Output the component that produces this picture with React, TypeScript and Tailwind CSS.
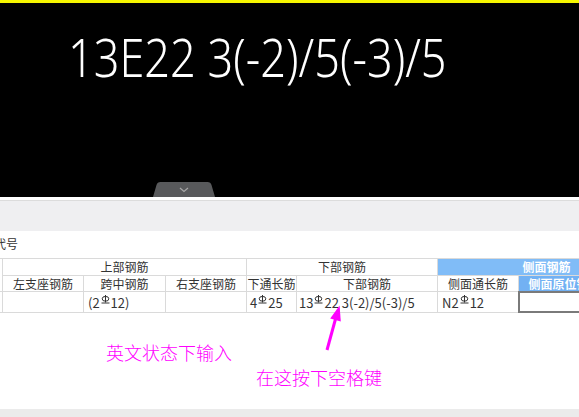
import React from 'react';

const cjk = { fontFamily: '"Noto Sans CJK SC", "Noto Sans", sans-serif' };

// 三级钢符号
function Bar() {
  return (
    <svg width="9" height="9" viewBox="0 0 9 9" className="inline-block mx-[1px] -translate-y-[3px]">
      <line x1="4.5" y1="0" x2="4.5" y2="7.5" stroke="#333" strokeWidth="1" />
      <ellipse cx="4.5" cy="3.8" rx="3.3" ry="2.4" fill="none" stroke="#333" strokeWidth="1" />
      <line x1="0.5" y1="8" x2="8.5" y2="8" stroke="#333" strokeWidth="1" />
    </svg>
  );
}

export default function App() {
  return (
    <div className="w-[579px] h-[417px] overflow-hidden bg-white relative" style={cjk}>
      <div className="h-[3px] bg-[#f7f700]" />
      <div className="h-[194px] bg-black flex flex-col">
        <div className="pt-[27px] pl-[68px]">
          <div
            className="text-white text-[53px] leading-none font-light whitespace-nowrap origin-left scale-x-[0.85]"
            style={{ fontFamily: '"Noto Sans", sans-serif' }}
          >
            13E22 3(-2)/5(-3)/5
          </div>
        </div>
        <div className="mt-auto ml-[153px]">
          <svg width="62" height="15" viewBox="0 0 62 15" className="block">
            <path d="M0 15 L3.5 3 Q4.3 0 7.5 0 L54.5 0 Q57.7 0 58.5 3 L62 15 Z" fill="#58595b" />
            <path d="M27 6 L31 9.5 L35 6" fill="none" stroke="#a8a8a8" strokeWidth="1.2" />
          </svg>
        </div>
      </div>
      <div className="h-[3px] bg-white" />
      <div className="h-px bg-[#dcdcdc]" />
      <div className="h-[30px] bg-[#efeff1]" />
      <div className="h-[27px] overflow-hidden">
        <div className="pt-[7px] -ml-[6px] text-[12px] leading-none text-[#333]">代号</div>
      </div>

      <div className="w-[655px] grid grid-cols-[2px_80px_81px_80px_49px_140px_80px_91px_44px] grid-rows-[16px_15px_20px] gap-px bg-[#dadada] py-px text-[12px] leading-none text-[#333]">
        <div className="row-span-2 bg-white" />
        <div className="col-span-3 bg-white flex items-center justify-center">上部钢筋</div>
        <div className="col-span-2 bg-white flex items-center justify-center">下部钢筋</div>
        <div className="col-span-3 bg-[#80bcf7] text-white font-bold flex items-center justify-center">侧面钢筋</div>

        <div className="bg-white flex items-center justify-center">左支座钢筋</div>
        <div className="bg-white flex items-center justify-center">跨中钢筋</div>
        <div className="bg-white flex items-center justify-center">右支座钢筋</div>
        <div className="bg-white flex items-center justify-center overflow-hidden whitespace-nowrap">下通长筋</div>
        <div className="bg-white flex items-center justify-center">下部钢筋</div>
        <div className="bg-white flex items-center justify-center">侧面通长筋</div>
        <div className="bg-[#72b1f3] text-white font-bold flex items-center justify-center">侧面原位钢筋</div>
        <div className="bg-[#72b1f3]" />

        <div className="bg-white" />
        <div className="bg-white" />
        <div className="bg-white flex items-center pl-[4px] text-[13px]">(2<Bar />12)</div>
        <div className="bg-white" />
        <div className="bg-white flex items-center pl-[3px] text-[13px]">4<Bar />25</div>
        <div className="bg-white flex items-center pl-[2px] text-[13px] whitespace-nowrap">13<Bar />22 3(-2)/5(-3)/5</div>
        <div className="bg-white flex items-center pl-[4px] text-[13px]">N2<Bar />12</div>
        <div className="bg-white border-2 border-[#7a7a7a] -m-px" />
        <div className="bg-white" />
      </div>

      <div className="h-[96px] text-[18px] leading-none text-[#ff00ff] font-light">
        <div className="pt-[30px] pl-[106px]">英文状态下输入</div>
        <div className="pt-[7px] pl-[256px]">在这按下空格键</div>
      </div>
      <div className="h-[10px] bg-[#ebebeb]" />

      <svg width="30" height="55" viewBox="0 0 30 55" className="absolute left-[320px] top-[300px]">
        <line x1="15.5" y1="19" x2="7" y2="50" stroke="#ff00ff" strokeWidth="3" />
        <path d="M19.6 5.6 L10.2 18.5 L20.8 21.5 Z" fill="#ff00ff" />
      </svg>
    </div>
  );
}
